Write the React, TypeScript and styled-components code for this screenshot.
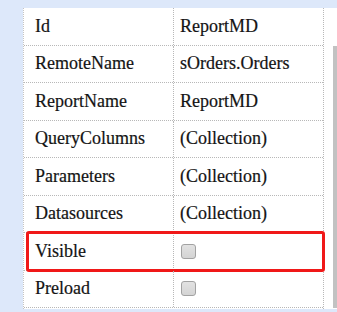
import React from 'react';
import styled, { createGlobalStyle } from 'styled-components';

const GlobalStyle = createGlobalStyle`
  html, body {
    margin: 0;
    padding: 0;
    background: #dde8fa;
  }
`;

type Prop = { name: string; value?: string; checkbox?: boolean; highlight?: boolean };

const props: Prop[] = [
  { name: 'Id', value: 'ReportMD' },
  { name: 'RemoteName', value: 'sOrders.Orders' },
  { name: 'ReportName', value: 'ReportMD' },
  { name: 'QueryColumns', value: '(Collection)' },
  { name: 'Parameters', value: '(Collection)' },
  { name: 'Datasources', value: '(Collection)' },
  { name: 'Visible', checkbox: true, highlight: true },
  { name: 'Preload', checkbox: true },
];

const App = () => {
  return (
    <>
      <GlobalStyle />
      <Page>
        <Panel>
          <Grid>
            {props.map((p) => (
              <Row key={p.name} $highlight={p.highlight}>
                <NameCell>{p.name}</NameCell>
                <ValueCell>{p.checkbox ? <Check /> : p.value}</ValueCell>
              </Row>
            ))}
          </Grid>
          <Track>
            <Thumb />
          </Track>
        </Panel>
      </Page>
    </>
  );
};

export default App;

const Page = styled.div`
  width: 337px;
  height: 312px;
  padding: 8px 0 0 23px;
  box-sizing: border-box;
  background: #dde8fa;
  font-family: 'Liberation Serif', 'DejaVu Serif', serif;
`;

const Panel = styled.div`
  display: flex;
  background: #ffffff;
  height: 301px;
`;

const Grid = styled.div`
  width: 301px;
  border-left: 1px dotted #c4c4c4;
  border-right: 1px dotted #b8b8b8;
  box-sizing: border-box;
`;

const Row = styled.div<{ $highlight?: boolean }>`
  position: relative;
  display: grid;
  grid-template-columns: 150px 1fr;
  height: 37.5px;
  box-sizing: border-box;
  border-bottom: 1px dotted #b8b8b8;
  font-family: 'Liberation Serif', serif;
  font-size: 18px;
  color: #141414;
  -webkit-text-stroke: 0.2px #141414;
  &::after {
    content: '';
    display: ${(p) => (p.$highlight ? 'block' : 'none')};
    position: absolute;
    left: 2px;
    right: -2px;
    top: -2px;
    bottom: -2px;
    border: 3px solid #f01818;
    border-radius: 3px;
    pointer-events: none;
  }
`;

const NameCell = styled.div`
  display: flex;
  align-items: center;
  padding-left: 11px;
  border-right: 1px dotted #b8b8b8;
`;

const ValueCell = styled.div`
  display: flex;
  align-items: center;
  padding-left: 6px;
`;

const Check = styled.span`
  display: inline-block;
  width: 15px;
  height: 15px;
  box-sizing: border-box;
  border: 1.5px solid #a2a2a2;
  border-radius: 3px;
  background: linear-gradient(#e2e2e2, #d4d4d4);
  margin-left: 1px;
`;

const Track = styled.div`
  margin-left: 9px;
  width: 4px;
  padding-top: 38px;
`;

const Thumb = styled.div`
  height: 262px;
  background: #c2c2c2;
`;
